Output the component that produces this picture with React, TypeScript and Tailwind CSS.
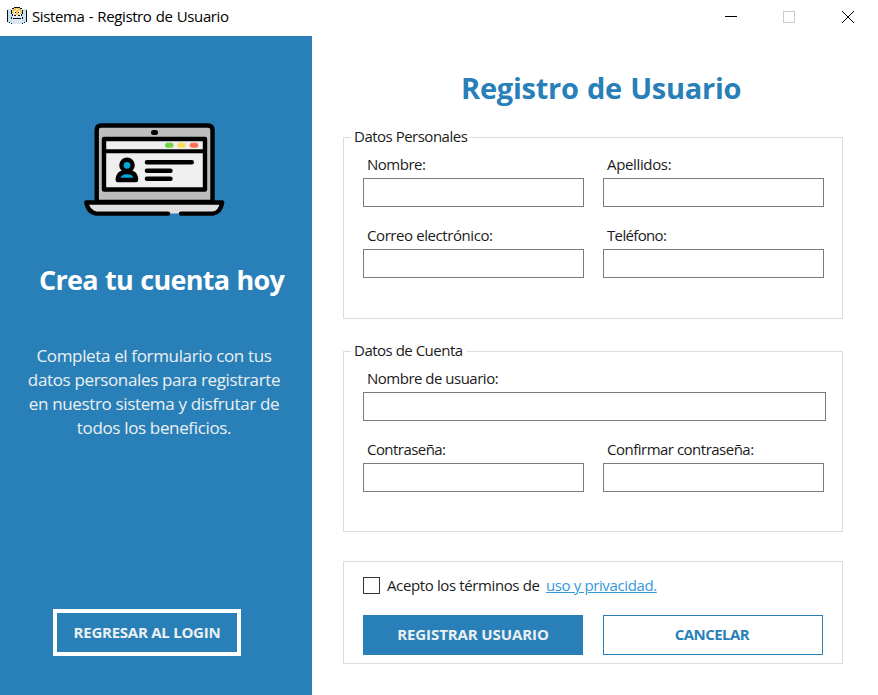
import React from 'react';

function AppIcon() {
  return (
    <svg width="21" height="19" viewBox="0 0 21 19" shapeRendering="crispEdges">
      <path fill="#c5e2f7" d="M1 2h5v14H1zM14 2h5v14h-5z" />
      <path fill="#dbe6f0" d="M5 9h10v8H5z" />
      <path fill="#f6c65a" d="M6 1h8v3H6zM5 3h10v4H5zM7 7h6v1H7z" />
      <path fill="#fff" d="M7 4h2v3H7zM11 4h2v3h-2zM9 2h2v1H9z" />
      <path fill="#111" d="M0 3h1v12H0zM19 3h1v12h-1zM7 0h6v1H7zM5 1h2v1H5zM13 1h2v1h-2zM4 3h1v4H4zM15 3h1v4h-1zM5 7h1v2H5zM14 7h1v2h-1zM8 5h1v1H8zM11 5h1v1h-1zM7 8h2v1H7zM11 8h2v1h-2zM6 11h8v1H6zM4 10h1v2H4zM15 10h1v2h-1zM2 15h1v1H2zM17 15h1v1h-1zM4 16h1v1H4zM15 16h1v1h-1z" />
    </svg>
  );
}

function Laptop() {
  return (
    <svg width="142" height="96" viewBox="0 0 142 96">
      <path d="M12.700 80V8Q12.700 3.500 17 3.500H124Q128.500 3.500 128.500 8V80Z" fill="#bdbdbd" stroke="#000" strokeWidth="4.400" />
      <rect x="20" y="17" width="101" height="50.500" fill="#efefef" stroke="#000" strokeWidth="4.400" strokeLinejoin="round" />
      <path d="M20 29.300H121" stroke="#000" strokeWidth="4" />
      <rect x="67" y="8" width="7" height="5" rx="2.500" />
      <rect x="81" y="20.700" width="8.500" height="5" rx="2.500" fill="#6dd344" />
      <rect x="93.300" y="20.700" width="8.500" height="5" rx="2.500" fill="#ffdb5b" />
      <rect x="105.700" y="20.700" width="8.500" height="5" rx="2.500" fill="#ff7051" />
      <path d="M33.800 58Q34 50 43 50Q52 50 52 58Z" fill="#06a8dc" stroke="#000" strokeWidth="4.400" strokeLinejoin="round" />
      <circle cx="43" cy="43.300" r="5.600" fill="#06a8dc" stroke="#000" strokeWidth="4.400" />
      <path d="M63 40.300H107.700M63 48.700H86.400M63 56.700H86.400" stroke="#000" strokeWidth="4.600" strokeLinecap="round" />
      <path d="M2.300 80.500H138.200Q137.500 91.500 129 91.500H12Q4 91.500 2.300 80.500Z" fill="#e1dfe0" />
      <path d="M84 91.600H12Q4 90 2.300 80.500H138.200Q136.500 90.500 129 91.600H97" fill="none" stroke="#000" strokeWidth="4.400" strokeLinecap="round" strokeLinejoin="round" />
    </svg>
  );
}

function Field({ label, wide, id, track }: { label: string; wide?: boolean; id: string; track: string }) {
  return (
    <div className={wide ? 'w-[463px]' : 'w-[222px]'}>
      <label htmlFor={id} className={`block h-[24px] pl-1 text-[15px] leading-[20px] whitespace-nowrap ${track}`}>{label}</label>
      <input id={id} className={`block h-[29px] border border-[#7a7a7a] bg-white px-2 text-[15px] outline-none ${wide ? 'w-[463px]' : 'w-[221px]'}`} />
    </div>
  );
}

export default function App() {
  return (
    <div className="flex h-[695px] w-[878px] flex-col overflow-hidden bg-white font-['Open_Sans','Noto_Sans',sans-serif] text-[#1b1b1b]">
      <header className="flex h-[36px] items-start">
        <div className="pt-[7px] pl-[7px]"><AppIcon /></div>
        <div className="pt-[6px] pl-1 text-[15px] leading-[20px] tracking-[-0.4px] [word-spacing:0.8px] whitespace-nowrap text-black">Sistema - Registro de Usuario</div>
        <svg className="mt-[10px] mr-[23px] ml-auto" width="130" height="14" viewBox="0 0 130 14" shapeRendering="crispEdges">
          <path d="M0 6.500H12" stroke="#000" />
          <rect x="58.500" y="1.500" width="11" height="11" fill="none" stroke="#ccc" />
          <path d="M117 1L129 13M129 1L117 13" stroke="#000" shapeRendering="auto" />
        </svg>
      </header>
      <div className="flex flex-1">
        <aside className="flex w-[312px] flex-col items-start bg-[#2980b9] text-white">
          <div className="mt-[86px] ml-[84px]"><Laptop /></div>
          <h2 className="mt-[44px] ml-[39px] text-[27px] leading-[36px] font-bold tracking-[-0.7px] [word-spacing:0.8px] whitespace-nowrap">Crea tu cuenta hoy</h2>
          <p className="mt-[46px] w-[308px] text-center text-[17px] leading-[24px] tracking-[-0.35px] whitespace-nowrap text-[#ecf0f1]">
            Completa el formulario con tus<br />datos personales para registrarte<br />en nuestro sistema y disfrutar de<br />todos los beneficios.
          </p>
          <button className="mt-auto mb-[39px] ml-[53px] h-[47px] w-[188px] border-4 border-white text-[15px] font-bold tracking-[-0.25px] whitespace-nowrap text-[#ecf0f1]">REGRESAR AL LOGIN</button>
        </aside>
        <main className="flex flex-1 flex-col pl-[31px]">
          <h1 className="mt-[32px] ml-[118px] text-[29px] leading-[40px] font-bold tracking-[-0.25px] [word-spacing:1px] whitespace-nowrap text-[#2980b9]">Registro de Usuario</h1>
          <section className="mt-[29px] h-[182px] w-[500px] border border-[#dcdcdc]">
            <h3 className="-mt-[12px] ml-[7px] w-[119px] bg-white pl-[3px] text-[15px] leading-[20px] font-medium tracking-[-0.5px] whitespace-nowrap">Datos Personales</h3>
            <div className="mt-[8px] ml-[19px] grid w-[462px] grid-cols-[240px_222px] gap-y-[18px]">
              <Field id="nombre" label="Nombre:" track="tracking-[-0.5px]" />
              <Field id="apellidos" label="Apellidos:" track="tracking-[-0.35px]" />
              <Field id="correo" label="Correo electrónico:" track="tracking-[-0.42px]" />
              <Field id="telefono" label="Teléfono:" track="tracking-[-0.65px]" />
            </div>
          </section>
          <section className="mt-[32px] h-[181px] w-[500px] border border-[#dcdcdc]">
            <h3 className="-mt-[12px] ml-[7px] w-[116px] bg-white pl-[3px] text-[15px] leading-[20px] font-medium tracking-[-0.5px] whitespace-nowrap">Datos de Cuenta</h3>
            <div className="mt-[8px] ml-[19px] flex w-[463px] flex-wrap gap-x-[18px] gap-y-[18px]">
              <Field id="usuario" label="Nombre de usuario:" wide track="tracking-[-0.5px]" />
              <Field id="clave" label="Contraseña:" track="tracking-[-0.55px]" />
              <Field id="confirmar" label="Confirmar contraseña:" track="tracking-[-0.5px]" />
            </div>
          </section>
          <section className="mt-[29px] h-[103px] w-[500px] border border-[#dcdcdc] pl-[19px]">
            <div className="mt-[13px] flex h-[20px] items-center text-[15px] leading-[20px] whitespace-nowrap">
              <span className="h-[17px] w-[17px] border border-[#333]" />
              <span className="ml-[7px] w-[159px] tracking-[-0.38px]">Acepto los términos de</span>
              <a className="tracking-[-0.38px] text-[#3498db] underline">uso y privacidad.</a>
            </div>
            <div className="mt-[20px] flex gap-[20px] text-[15px] font-bold">
              <button className="h-[40px] w-[220px] bg-[#2980b9] pb-[2px] tracking-[-0.1px] text-[#ecf0f1]">REGISTRAR USUARIO</button>
              <button className="h-[40px] w-[220px] border border-[#2980b9] pr-[2px] pb-[2px] tracking-[-0.55px] text-[#2980b9]">CANCELAR</button>
            </div>
          </section>
        </main>
      </div>
    </div>
  );
}
